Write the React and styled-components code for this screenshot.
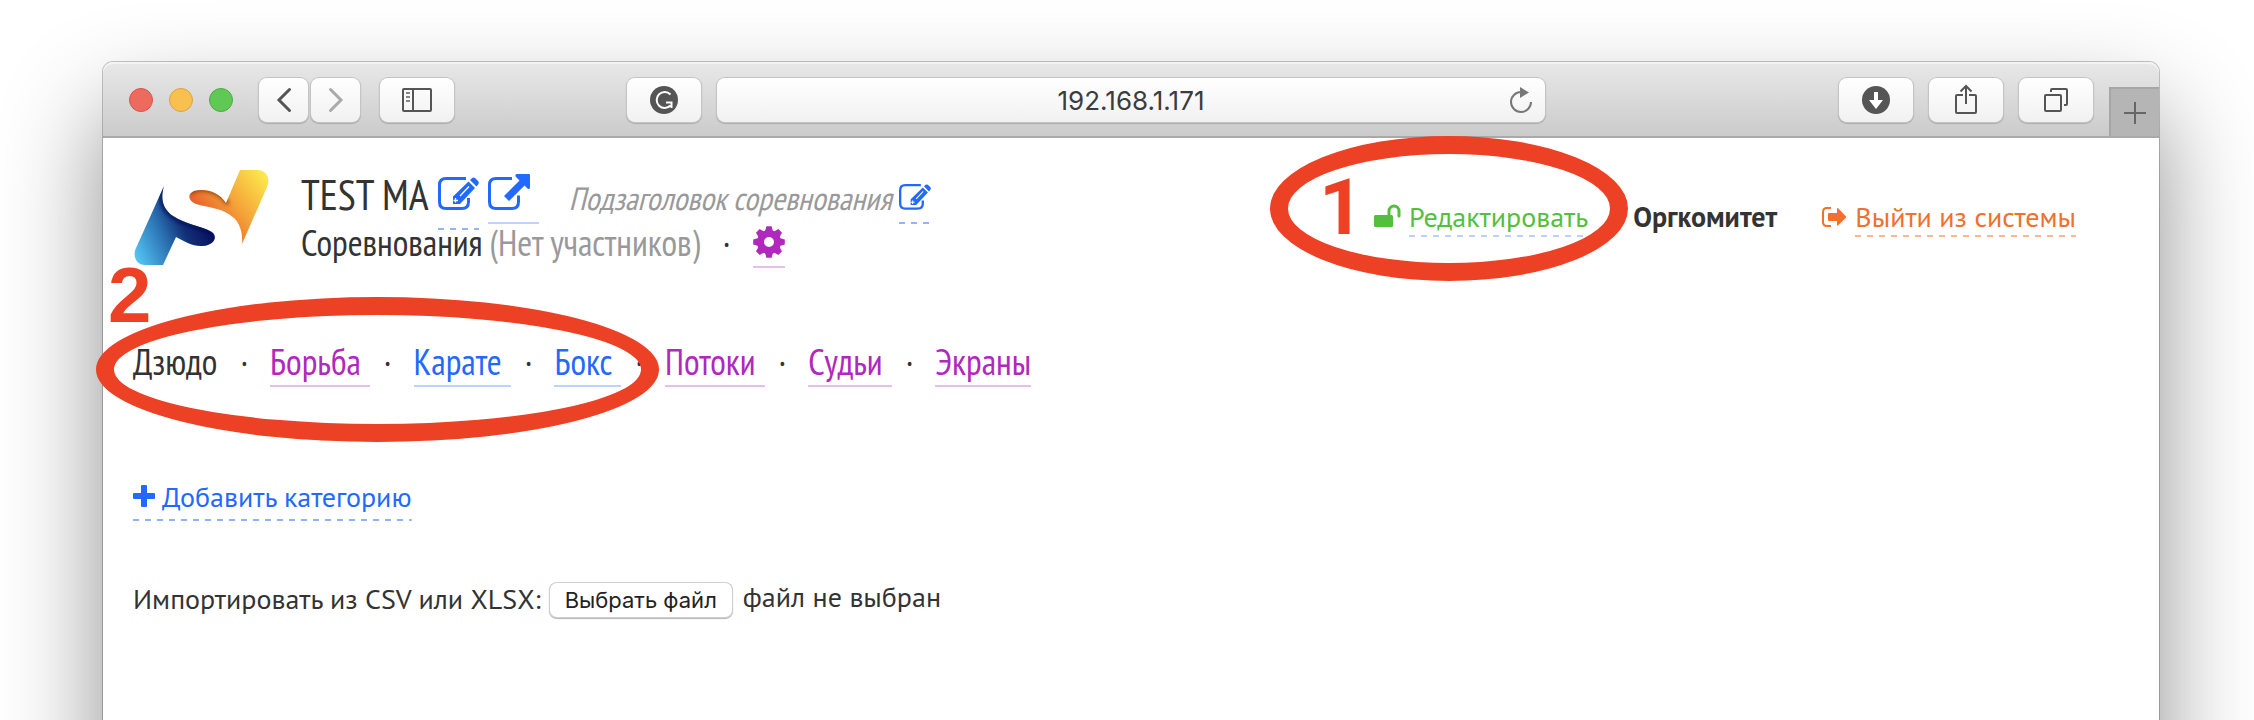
import React, { useRef, useState } from 'react'
import styled, { createGlobalStyle, css } from 'styled-components'

const colors = {
  text: '#333',
  muted: '#999',
  blue: '#2469ff',
  blueDash: '#91b4ff',
  blueLine: '#bdd2ff',
  purple: '#b028bd',
  purpleLine: '#e7bfeb',
  green: '#53bf3c',
  orange: '#f0702c',
  orangeDash: '#f8b795',
  marker: '#ec4124',
  icon: '#555',
}

const dashedLine = css`
  background: repeating-linear-gradient(90deg, ${props => props.$line} 0 6px, transparent 6px 12px) bottom / 100% 2px
    no-repeat;
`

const GlobalStyle = createGlobalStyle`
  * {
    box-sizing: border-box;
  }

  body {
    margin: 0;
    background: #fff;
    color: ${colors.text};
    font-family: 'PT Sans', 'Open Sans', sans-serif;
    font-size: 28px;
    line-height: 36px;
  }

  button {
    margin: 0;
    padding: 0;
    border: none;
    background: none;
    font: inherit;
    color: inherit;
    cursor: pointer;
  }

  a {
    color: inherit;
    text-decoration: none;
  }

  svg {
    flex: none;
    overflow: visible;
  }
`

const Desktop = styled.div`
  display: flex;
  min-height: 100vh;
  padding: 62px 95px 0 103px;
  overflow: hidden;
`

const Window = styled.div`
  flex: 1;
  min-width: 0;
  margin-bottom: -100px;
  border-radius: 10px 10px 0 0;
  background: #fff;
  box-shadow: 0 0 0 1px rgba(0, 0, 0, 0.22), 0 50px 100px rgba(0, 0, 0, 0.45);
`

const Toolbar = styled.div`
  display: grid;
  grid-template-columns: 1fr minmax(0, 828px) 1fr;
  gap: 16px;
  height: 76px;
  padding-top: 2px;
  border-bottom: 2px solid #a9a9a9;
  border-radius: 10px 10px 0 0;
  background: linear-gradient(#e8e8e8, #cbcbcb);
  box-shadow: inset 0 2px 0 #f3f3f3;
`

const ToolbarSide = styled.div`
  display: flex;
  align-items: center;
  justify-content: ${props => (props.$end ? 'flex-end' : 'space-between')};
  gap: 16px;
`

const Controls = styled.div`
  display: flex;
  align-items: center;
  gap: 20px;
  padding-left: 26px;
`

const Lights = styled.div`
  display: flex;
  gap: 16px;
  margin-right: 6px;
`

const Light = styled.button`
  width: 24px;
  height: 24px;
  border: 1px solid ${props => props.$edge};
  border-radius: 50%;
  background: ${props => props.$fill};
`

const History = styled.div`
  display: flex;
  gap: 3px;
`

const ToolButton = styled.button`
  display: flex;
  align-items: center;
  justify-content: center;
  width: ${props => (props.$narrow ? '49px' : '74px')};
  height: 44px;
  border-radius: 8px;
  background: linear-gradient(#fff, #f1f1f1);
  box-shadow: 0 0 0 1px #c4c4c4, 0 1px 1px 1px #aaa;
  color: ${props => (props.$dim ? '#aaa' : colors.icon)};
`

const AddressBar = styled.div`
  display: flex;
  align-items: center;
  align-self: center;
  position: relative;
  height: 44px;
  border-radius: 8px;
  background: linear-gradient(#fff, #f1f1f1);
  box-shadow: 0 0 0 1px #c4c4c4, 0 1px 1px 1px #aaa;
`

const AddressInput = styled.input`
  width: 100%;
  padding: 0 48px;
  border: none;
  outline: none;
  background: none;
  font-family: Inter, sans-serif;
  font-size: 26px;
  color: #3c3c3c;
  text-align: center;
`

const ReloadButton = styled.button`
  display: flex;
  position: absolute;
  right: 12px;
  color: #777;
`

const NewTab = styled.button`
  display: flex;
  align-items: center;
  justify-content: center;
  align-self: flex-end;
  width: 50px;
  height: 49px;
  border-top: 2px solid #a6a6a6;
  border-left: 2px solid #a6a6a6;
  background: #b5b5b5;
  color: #666;
`

const Page = styled.main`
  padding: 32px 83px 32px 30px;
`

const Header = styled.header`
  display: flex;
  align-items: flex-start;
  gap: 32px;
`

const Heading = styled.div`
  flex: 1;
  padding-top: 1px;
  font-family: 'PT Sans Narrow', 'Open Sans Condensed', sans-serif;
  font-size: 36px;
  line-height: 48px;
  white-space: nowrap;
`

const Line = styled.div`
  display: flex;
  align-items: baseline;
  height: 48px;
`

const Title = styled.h1`
  margin: 0 9px 0 0;
  font-size: 42px;
  font-weight: 400;
`

const Subtitle = styled.em`
  margin: 0 7px 0 30px;
  font-size: 32px;
  color: ${colors.muted};
`

const Muted = styled.span`
  margin: 0 9px 0 7px;
  color: ${colors.muted};
`

const IconLink = styled.a`
  padding-bottom: 12px;
  border-bottom: 2px solid ${props => props.$line};
  line-height: 0;
  color: ${props => props.$color};
`

const OpenLink = styled(IconLink)`
  margin-left: 9px;
  padding-right: 9px;
`

const SettingsLink = styled(IconLink)`
  padding-bottom: 8px;
`

const EditLink = styled(IconLink)`
  padding-bottom: ${props => (props.$large ? '20px' : '14px')};
  border: none;
  ${dashedLine}
`

const Account = styled.div`
  display: flex;
  gap: 45px;
  margin-top: 30px;
  line-height: 34px;
  white-space: nowrap;
`

const Action = styled.div`
  display: flex;
  align-items: baseline;
  gap: 8px;
  position: relative;
  color: ${props => props.$color};
`

const ActionButton = styled.button`
  padding-bottom: 3px;
  ${dashedLine}
`

const Tabs = styled.nav`
  display: flex;
  position: relative;
  width: max-content;
  margin-top: 72px;
  font-family: 'PT Sans Narrow', 'Open Sans Condensed', sans-serif;
  font-size: 36px;
  line-height: 46px;
  white-space: nowrap;
`

const Tab = styled.a`
  padding-right: ${props => (props.$last ? 0 : '9px')};
  border-bottom: 2px solid ${props => props.$line || 'transparent'};
  color: ${props => props.$color};
`

const Dot = styled.span`
  padding: 0 22px 0 14px;
`

const AddButton = styled.button`
  display: flex;
  align-items: baseline;
  gap: 7px;
  margin-top: 92px;
  padding-bottom: 6px;
  color: ${colors.blue};
  ${dashedLine}
`

const ImportRow = styled.div`
  display: flex;
  align-items: flex-end;
  margin-top: 58px;
`

const ChooseButton = styled.button`
  height: 34px;
  margin: 0 11px 0 9px;
  padding: 0 15px;
  border-radius: 7px;
  background: #fff;
  box-shadow: 0 0 0 1px #d0d0d0, 0 1px 1px 1px #b4b4b4;
  font-family: Inter, sans-serif;
  font-size: 22px;
  line-height: 34px;
  color: #222;
`

const FileStatus = styled.output`
  padding-bottom: 2px;
`

const Ring = styled.span`
  position: absolute;
  top: ${props => props.$top};
  left: ${props => props.$left};
  width: ${props => props.$width};
  height: 145px;
  border: 18px solid ${colors.marker};
  border-radius: 50%;
  pointer-events: none;
`

const StepNumber = styled.strong`
  position: absolute;
  top: ${props => props.$top};
  left: ${props => props.$left};
  font-family: ${props => props.$font}, sans-serif;
  font-size: 78px;
  line-height: 78px;
  color: ${colors.marker};
  pointer-events: none;
`

const ChevronIcon = ({ flip }) => (
  <svg width="14" height="24" viewBox="0 0 14 24" fill="none" stroke="currentColor" strokeWidth="3" strokeLinecap="round">
    <path d={flip ? 'M1.5 1.5L12 12L1.5 22.5' : 'M12.5 1.5L2 12L12.5 22.5'} />
  </svg>
)

const SidebarIcon = () => (
  <svg width="30" height="24" viewBox="0 0 30 24" fill="none" stroke="currentColor" strokeWidth="2">
    <rect x="1" y="1" width="28" height="22" rx="1" />
    <path d="M11 1V23" />
    <path d="M4 5H8M4 9H8M4 13H8" opacity="0.7" />
  </svg>
)

const GrammarlyIcon = () => (
  <svg width="28" height="28" viewBox="0 0 28 28">
    <circle cx="14" cy="14" r="14" fill="currentColor" />
    <path d="M20.5 8.5A8 8 0 1 0 20.5 19.5M16 16.5H21.5V22" fill="none" stroke="#fff" strokeWidth="2" />
  </svg>
)

const ReloadIcon = () => (
  <svg width="24" height="28" viewBox="0 0 24 28">
    <path d="M12 6A10 10 0 1 0 22 16" fill="none" stroke="currentColor" strokeWidth="2" />
    <path d="M11 1L20 6.5L11 12Z" fill="currentColor" />
  </svg>
)

const DownloadIcon = () => (
  <svg width="28" height="28" viewBox="0 0 28 28">
    <circle cx="14" cy="14" r="14" fill="currentColor" />
    <path d="M12 6H16V14H21L14 23L7 14H12Z" fill="#fff" />
  </svg>
)

const ShareIcon = () => (
  <svg width="22" height="32" viewBox="0 0 22 32" fill="none" stroke="currentColor" strokeWidth="2">
    <path d="M8 11H2Q1 11 1 12V28Q1 29 2 29H20Q21 29 21 28V12Q21 11 20 11H14M11 20V2M5.5 7.5L11 2L16.5 7.5" />
  </svg>
)

const TabsIcon = () => (
  <svg width="24" height="24" viewBox="0 0 24 24" fill="none" stroke="currentColor" strokeWidth="2">
    <rect x="1" y="7" width="16" height="16" rx="1" />
    <path d="M7 4V2Q7 1 8 1H22Q23 1 23 2V16Q23 17 22 17H20" />
  </svg>
)

const PlusIcon = () => (
  <svg width="22" height="22" viewBox="0 0 22 22" fill="none" stroke="currentColor" strokeWidth="2">
    <path d="M11 0V22M0 11H22" />
  </svg>
)

const EditIcon = ({ size }) => (
  <svg width={size} viewBox="0 0 41 33" fill="currentColor">
    <path
      d="M28 1.5H8Q1.5 1.5 1.5 8V25Q1.5 31.5 8 31.5H24Q30.5 31.5 30.5 25V21"
      fill="none"
      stroke="currentColor"
      strokeWidth="3"
    />
    <path d="M15 19.5L30.5 4.5L37 11L22 27H15Z" />
    <path d="M32 3L34.2 1Q35.5 0 37 1L40.3 4.2Q41.5 5.8 40.3 7.2L38.5 9.5Z" />
    <path d="M22 19L31 9.5M17.5 21V25.5M15.5 23.5H20" fill="none" stroke="#fff" strokeWidth="1.3" />
  </svg>
)

const ExternalIcon = () => (
  <svg width="42" height="36" viewBox="0 0 42 36" fill="currentColor">
    <path
      d="M24 4.5H8Q1.5 4.5 1.5 11V28Q1.5 34.5 8 34.5H24Q30.5 34.5 30.5 28V21.5"
      fill="none"
      stroke="currentColor"
      strokeWidth="3"
    />
    <path d="M28.5 0H41Q42 0 42 1V13.5Q41.5 16 39.5 14.5L36.5 11.5L21 27L16 22L31.5 6.5L28 3Q26.5 1 28.5 0Z" />
  </svg>
)

const GearShape = styled.svg`
  vertical-align: -2px;
`

const GearIcon = () => (
  <GearShape width="32" height="32" viewBox="-16 -16 32 32" fill="currentColor">
    <circle r="8.5" fill="none" stroke="currentColor" strokeWidth="7" />
    {[0, 45, 90, 135, 180, 225, 270, 315].map(angle => (
      <path key={angle} d="M-2.6 -15.8H2.6L4 -10.5H-4Z" transform={`rotate(${angle})`} />
    ))}
  </GearShape>
)

const UnlockIcon = () => (
  <svg width="27" height="22" viewBox="0 0 27 22">
    <rect y="10" width="19" height="12" rx="1.5" fill="currentColor" />
    <path d="M15 10.5V6A5 5 0 0 1 25 6V11" fill="none" stroke="currentColor" strokeWidth="3" strokeLinecap="round" />
  </svg>
)

const ExitIcon = () => (
  <svg width="25" height="20" viewBox="0 0 25 20">
    <path d="M9 1H5Q1 1 1 5V15Q1 19 5 19H9" fill="none" stroke="currentColor" strokeWidth="2" />
    <path d="M7 6H15V1.5Q15.5 0.5 16.5 1.5L24 9.5Q24.5 10 24 10.5L16.5 18Q15.5 19 15 18V14H7Q6 14 6 13V7Q6 6 7 6Z" fill="currentColor" />
  </svg>
)

const AddIcon = () => (
  <svg width="22" height="22" viewBox="0 0 22 22" fill="currentColor">
    <rect x="8" width="6" height="22" rx="1" />
    <rect y="8" width="22" height="6" rx="1" />
  </svg>
)

const blueShape = 'M31 16L3 78C-1 87 4 95 12 95H30L43 67C51 71 60 77 70 76C82 75 86 65 77 61C68 56 52 54 40 46C30 39 27 29 31 16Z'
const goldShape = 'M107 0H124C133 0 138 8 134 17L109 74C110 63 107 54 101 48C89 37 75 38 63 34C55 31 54 24 61 21C72 18 86 22 93 33Z'

const Logo = () => (
  <svg width="136" height="96" viewBox="0 0 136 96">
    <defs>
      <linearGradient id="blue" gradientUnits="userSpaceOnUse" x1="6" y1="92" x2="76" y2="60">
        <stop offset="0" stopColor="#53c3f1" />
        <stop offset="0.45" stopColor="#286cae" />
        <stop offset="0.7" stopColor="#123078" />
        <stop offset="1" stopColor="#07125f" />
      </linearGradient>
      <linearGradient id="gold" gradientUnits="userSpaceOnUse" x1="130" y1="2" x2="74" y2="48">
        <stop offset="0" stopColor="#fce94c" />
        <stop offset="0.6" stopColor="#f4a038" />
        <stop offset="1" stopColor="#e9622b" />
      </linearGradient>
      <clipPath id="blueClip">
        <path d={blueShape} />
      </clipPath>
      <clipPath id="goldClip">
        <path d={goldShape} />
      </clipPath>
      <filter id="soft" x="-20%" y="-50%" width="140%" height="200%">
        <feGaussianBlur stdDeviation="2" />
      </filter>
    </defs>
    <path fill="url(#blue)" d={blueShape} />
    <g clipPath="url(#blueClip)">
      <path
        d="M31 16C27 29 30 39 40 46C52 54 68 56 77 61"
        fill="none"
        stroke="#050d52"
        strokeWidth="4"
        filter="url(#soft)"
      />
    </g>
    <path fill="url(#gold)" d={goldShape} />
    <g clipPath="url(#goldClip)">
      <path d="M57 23C66 16 86 19 95 34" fill="none" stroke="#6e2c10" strokeWidth="3" filter="url(#soft)" />
    </g>
  </svg>
)

const sections = [
  { title: 'Дзюдо', color: colors.text },
  { title: 'Борьба', color: colors.purple, line: colors.purpleLine },
  { title: 'Карате', color: colors.blue, line: colors.blueLine },
  { title: 'Бокс', color: colors.blue, line: colors.blueLine },
  { title: 'Потоки', color: colors.purple, line: colors.purpleLine },
  { title: 'Судьи', color: colors.purple, line: colors.purpleLine },
  { title: 'Экраны', color: colors.purple, line: colors.purpleLine },
]

const BrowserToolbar = () => (
  <Toolbar>
    <ToolbarSide>
      <Controls>
        <Lights>
          <Light aria-label="Закрыть" $fill="#ef6a5e" $edge="#d9544a" />
          <Light aria-label="Свернуть" $fill="#f7c04f" $edge="#dba33c" />
          <Light aria-label="Развернуть" $fill="#60c855" $edge="#4bac3f" />
        </Lights>
        <History>
          <ToolButton $narrow aria-label="Назад">
            <ChevronIcon />
          </ToolButton>
          <ToolButton $narrow $dim aria-label="Вперёд">
            <ChevronIcon flip />
          </ToolButton>
        </History>
        <ToolButton aria-label="Боковая панель">
          <SidebarIcon />
        </ToolButton>
      </Controls>
      <ToolButton aria-label="Grammarly">
        <GrammarlyIcon />
      </ToolButton>
    </ToolbarSide>
    <AddressBar>
      <AddressInput aria-label="Адрес" defaultValue="192.168.1.171" />
      <ReloadButton aria-label="Обновить">
        <ReloadIcon />
      </ReloadButton>
    </AddressBar>
    <ToolbarSide $end>
      <ToolButton aria-label="Загрузки">
        <DownloadIcon />
      </ToolButton>
      <ToolButton aria-label="Поделиться">
        <ShareIcon />
      </ToolButton>
      <ToolButton aria-label="Все вкладки">
        <TabsIcon />
      </ToolButton>
      <NewTab aria-label="Новая вкладка">
        <PlusIcon />
      </NewTab>
    </ToolbarSide>
  </Toolbar>
)

const FileImport = () => {
  const input = useRef(null)
  const [name, setName] = useState('')
  return (
    <ImportRow>
      <label htmlFor="import">Импортировать из CSV или XLSX:</label>
      <ChooseButton type="button" onClick={() => input.current.click()}>
        Выбрать файл
      </ChooseButton>
      <input
        id="import"
        ref={input}
        type="file"
        accept=".csv,.xlsx"
        hidden
        onChange={e => setName(e.target.files[0] ? e.target.files[0].name : '')}
      />
      <FileStatus htmlFor="import">{name || 'файл не выбран'}</FileStatus>
    </ImportRow>
  )
}

const App = () => (
  <Desktop>
    <GlobalStyle />
    <Window>
      <BrowserToolbar />
      <Page>
        <Header>
          <Logo />
          <Heading>
            <Line>
              <Title>TEST MA</Title>
              <EditLink href="#title" aria-label="Изменить название" $large $color={colors.blue} $line={colors.blueDash}>
                <EditIcon size={41} />
              </EditLink>
              <OpenLink href="#open" aria-label="Открыть" $color={colors.blue} $line={colors.blueLine}>
                <ExternalIcon />
              </OpenLink>
              <Subtitle>Подзаголовок соревнования</Subtitle>
              <EditLink href="#subtitle" aria-label="Изменить подзаголовок" $color={colors.blue} $line={colors.blueDash}>
                <EditIcon size={32} />
              </EditLink>
            </Line>
            <Line>
              Соревнования
              <Muted>(Нет участников)</Muted>
              <Dot>·</Dot>
              <SettingsLink href="#settings" aria-label="Настройки" $color={colors.purple} $line={colors.purpleLine}>
                <GearIcon />
              </SettingsLink>
            </Line>
          </Heading>
          <Account>
            <Action $color={colors.green}>
              <UnlockIcon />
              <ActionButton $line={colors.blueLine}>Редактировать</ActionButton>
              <Ring $top="-64px" $left="-104px" $width="358px" />
              <StepNumber $top="-31px" $left="-55px" $font="Roboto">
                1
              </StepNumber>
            </Action>
            <strong>Оргкомитет</strong>
            <Action $color={colors.orange}>
              <ExitIcon />
              <ActionButton $line={colors.orangeDash}>Выйти из системы</ActionButton>
            </Action>
          </Account>
        </Header>
        <Tabs>
          {sections.map((section, i) => (
            <React.Fragment key={section.title}>
              {i > 0 && <Dot>·</Dot>}
              <Tab href="#" $color={section.color} $line={section.line} $last={i === sections.length - 1}>
                {section.title}
              </Tab>
            </React.Fragment>
          ))}
          <Ring $top="-42px" $left="-37px" $width="563px" />
          <StepNumber $top="-83px" $left="-25px" $font="'Liberation Sans'">
            2
          </StepNumber>
        </Tabs>
        <AddButton $line={colors.blueDash}>
          <AddIcon />
          Добавить категорию
        </AddButton>
        <FileImport />
      </Page>
    </Window>
  </Desktop>
)

export default App
